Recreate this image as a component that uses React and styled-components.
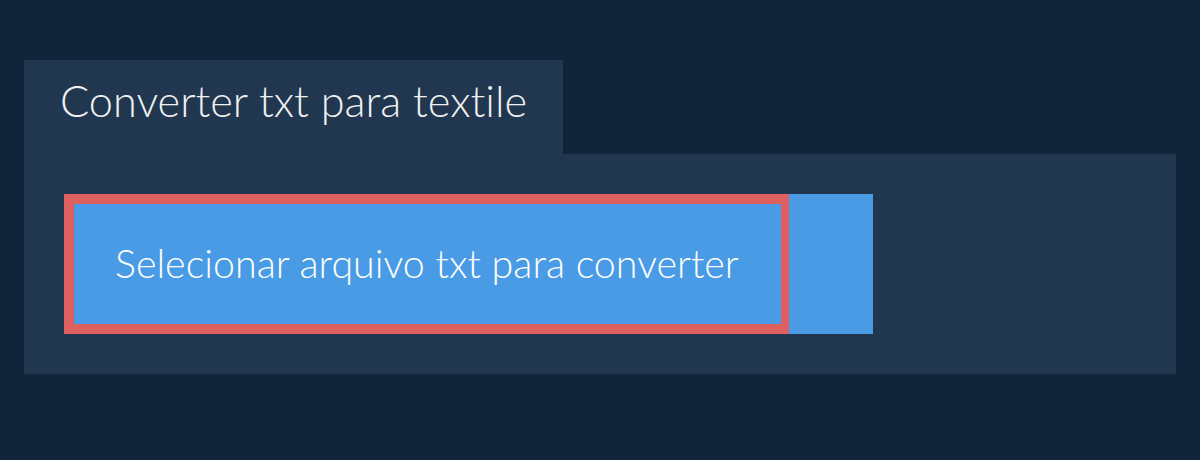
import React from "react";
import styled, { createGlobalStyle } from "styled-components";

const GlobalStyle = createGlobalStyle`
  html, body {
    margin: 0;
    padding: 0;
    background: #11243a;
    font-family: Lato, "Liberation Sans", sans-serif;
    font-variant-ligatures: no-common-ligatures;
  }
`;

const Page = styled.main`
  padding: 60px 24px 0;
`;

const Tab = styled.h1`
  display: inline-block;
  margin: 0;
  padding: 0 36px;
  height: 94px;
  line-height: 80px;
  background: #21364f;
  color: #eef0f2;
  font-size: 43.3px;
  font-weight: 300;
  box-sizing: border-box;
`;

const Panel = styled.section`
  background: #21364f;
  padding: 40px;
  display: flex;
`;

const UploadButton = styled.button`
  display: flex;
  width: 809px;
  height: 140px;
  padding: 0;
  border: none;
  background: #4a9be6;
  cursor: pointer;
`;

const Focus = styled.span`
  display: flex;
  align-items: center;
  box-sizing: border-box;
  width: 725px;
  height: 100%;
  padding: 0 0 4px 41px;
  border: solid #de5f5f;
  border-width: 10px 8px 10px 10px;
  color: #ffffff;
  font-family: Lato, "Liberation Sans", sans-serif;
  font-size: 39.4px;
  font-weight: 300;
  font-variant-ligatures: no-common-ligatures;
`;

export default function App() {
  return (
    <>
      <GlobalStyle />
      <Page>
        <Tab>Converter txt para textile</Tab>
        <Panel>
          <UploadButton type="button">
            <Focus>Selecionar arquivo txt para converter</Focus>
          </UploadButton>
        </Panel>
      </Page>
    </>
  );
}
